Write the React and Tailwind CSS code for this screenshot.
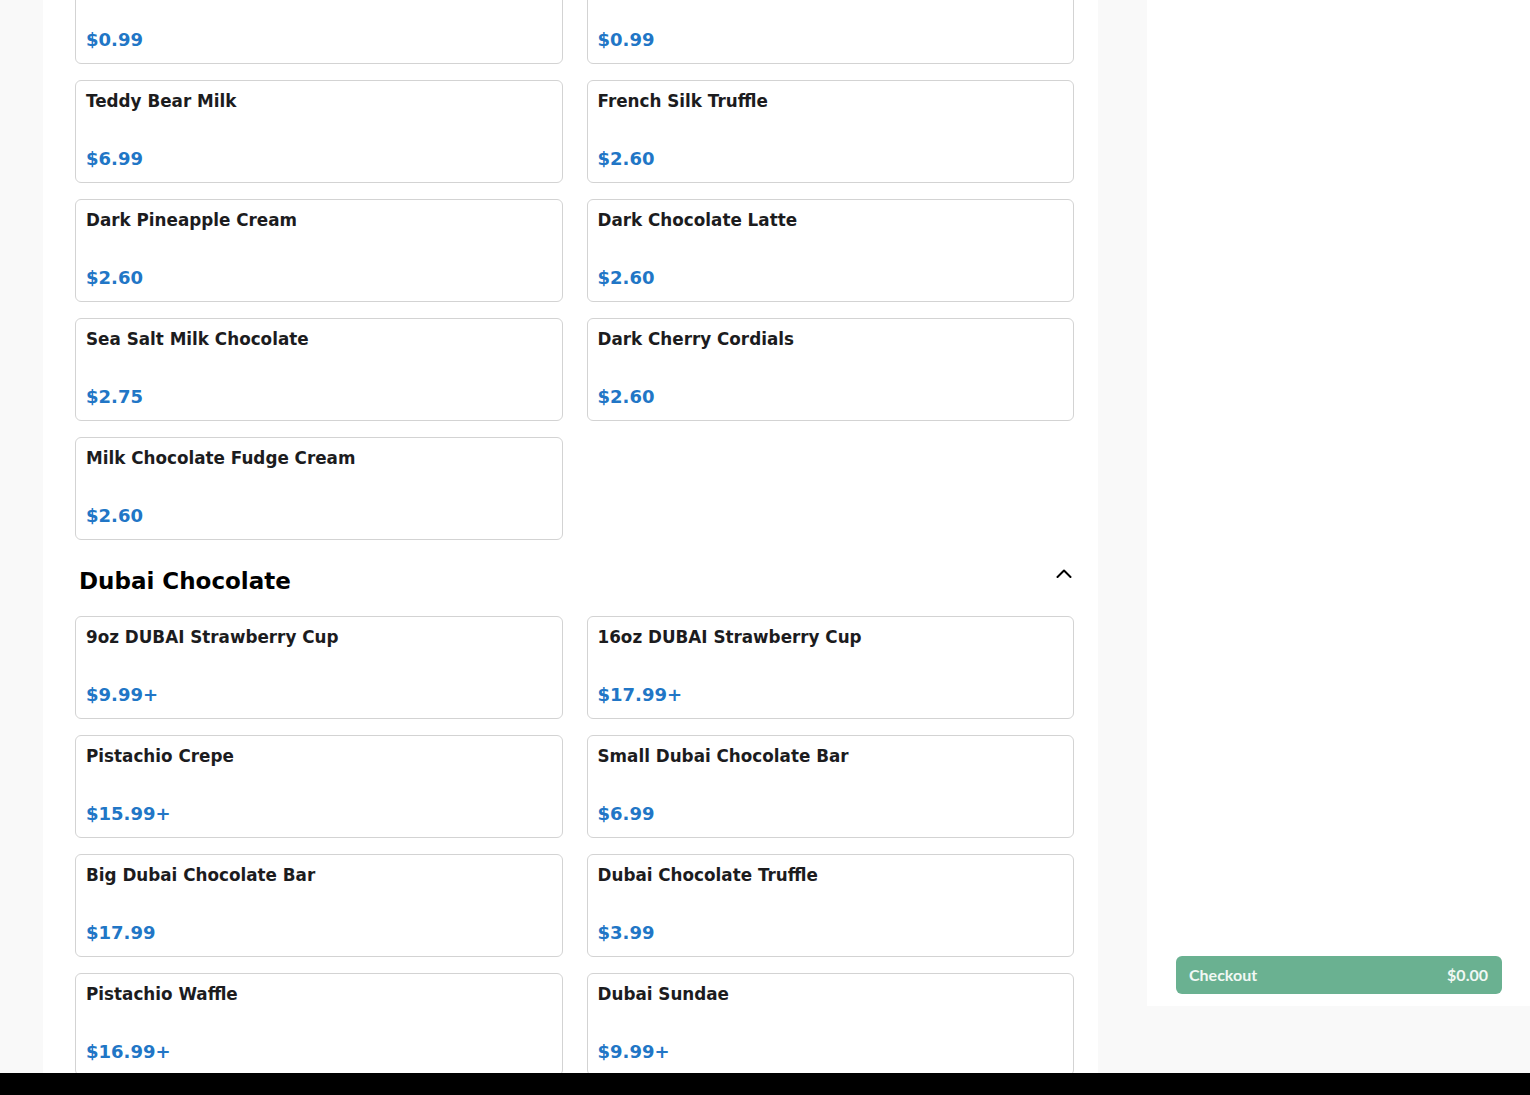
const topItems = [
  { name: "", price: "$0.99" },
  { name: "", price: "$0.99" },
  { name: "Teddy Bear Milk", price: "$6.99" },
  { name: "French Silk Truffle", price: "$2.60" },
  { name: "Dark Pineapple Cream", price: "$2.60" },
  { name: "Dark Chocolate Latte", price: "$2.60" },
  { name: "Sea Salt Milk Chocolate", price: "$2.75" },
  { name: "Dark Cherry Cordials", price: "$2.60" },
  { name: "Milk Chocolate Fudge Cream", price: "$2.60" },
];

const dubaiItems = [
  { name: "9oz DUBAI Strawberry Cup", price: "$9.99+" },
  { name: "16oz DUBAI Strawberry Cup", price: "$17.99+" },
  { name: "Pistachio Crepe", price: "$15.99+" },
  { name: "Small Dubai Chocolate Bar", price: "$6.99" },
  { name: "Big Dubai Chocolate Bar", price: "$17.99" },
  { name: "Dubai Chocolate Truffle", price: "$3.99" },
  { name: "Pistachio Waffle", price: "$16.99+" },
  { name: "Dubai Sundae", price: "$9.99+" },
];

function ItemCard({ item }) {
  return (
    <div className="h-[103px] flex flex-col justify-between border border-[#d3d3d3] rounded-md bg-white pt-[10px] pb-[12px] px-[10px]">
      <div className="text-[16.8px] leading-[20px] font-bold text-[#1c1c1e]">
        {item.name}
      </div>
      <div className="text-[18px] leading-[22px] font-bold text-[#2176c6]">
        {item.price}
      </div>
    </div>
  );
}

export default function App() {
  return (
    <div
      className="w-[1530px] h-[1095px] flex flex-col bg-[#f9f9f9] overflow-hidden"
      style={{ fontFamily: '"DejaVu Sans", sans-serif' }}
    >
      <div className="h-[1073px] flex overflow-hidden">
        <div className="w-[43px] shrink-0" />
        <main className="w-[1055px] shrink-0 bg-white pl-[32px] pr-[24px] overflow-hidden">
          <div className="-mt-[39px]">
            <div className="grid grid-cols-2 gap-x-[24px] gap-y-[16px]">
              {topItems.map((item, i) => (
                <ItemCard key={i} item={item} />
              ))}
            </div>

            <div className="flex items-start justify-between mt-[28px] mb-[21px] pl-[4px]">
              <h2 className="text-[23px] leading-[27px] font-bold text-black">
                Dubai Chocolate
              </h2>
              <svg
                width="16"
                height="9"
                viewBox="0 0 16 9"
                fill="none"
                stroke="black"
                strokeWidth="2"
                strokeLinecap="round"
                strokeLinejoin="round"
                className="mt-[1px] mr-[2px]"
              >
                <polyline points="1.5,8 8,1.5 14.5,8" />
              </svg>
            </div>

            <div className="grid grid-cols-2 gap-x-[24px] gap-y-[16px]">
              {dubaiItems.map((item, i) => (
                <ItemCard key={i} item={item} />
              ))}
            </div>
          </div>
        </main>
        <div className="w-[49px] shrink-0" />
        <aside className="w-[383px] h-[1006px] shrink-0 bg-white flex flex-col justify-end pl-[29px] pr-[28px] pb-[12px]">
          <button
            className="h-[38px] w-full rounded-md bg-[#6ab191] flex items-center justify-between pl-[13px] pr-[14px] text-[#f1f8f4] text-[16px] font-bold"
            style={{ fontFamily: 'Lato, "Open Sans", sans-serif' }}
          >
            <span>Checkout</span>
            <span>$0.00</span>
          </button>
        </aside>
      </div>
      <div className="h-[22px] bg-black" />
    </div>
  );
}
